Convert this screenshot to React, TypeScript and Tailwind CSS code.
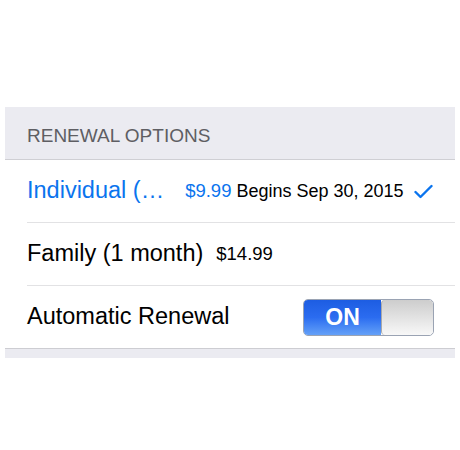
import { useState } from "react";

function Check() {
  return (
    <svg width="19" height="15" viewBox="0 0 19 15" className="ml-auto shrink-0">
      <path
        d="M1.5 8 L6.5 13 L17.5 2"
        fill="none"
        stroke="#0a74ee"
        strokeWidth="2.4"
        strokeLinecap="round"
        strokeLinejoin="round"
      />
    </svg>
  );
}

function Toggle({ on, onChange }: { on: boolean; onChange: () => void }) {
  return (
    <button
      type="button"
      onClick={onChange}
      className="ml-auto flex h-[37px] w-[131px] overflow-hidden rounded-[5px] border border-[#9aa3b3]"
    >
      <span className="flex h-full w-[77px] items-center justify-center bg-gradient-to-b from-[#1d5de2] via-[#2b6cf0] to-[#64a0f7] text-[23px] font-bold text-white">
        {on ? "ON" : "OFF"}
      </span>
      <span className="h-full flex-1 rounded-[4px] border-l border-[#a9a9a9] bg-gradient-to-b from-[#cdcdcd] to-[#f8f8f8]" />
    </button>
  );
}

export default function App() {
  const [selected, setSelected] = useState<"individual" | "family">("individual");
  const [auto, setAuto] = useState(true);

  return (
    <div
      className="min-h-[450px] w-[460px] bg-white px-[5px] pt-[107px]"
      style={{ fontFamily: '"Liberation Sans", Arial, sans-serif' }}
    >
      <div className="bg-[#ebebf1] pb-[9px]">
        <div className="flex h-[53px] items-center border-b border-[#cfcfd4] pl-[22px] pt-[7px] text-[19px] text-[#5e5e63]">
          RENEWAL OPTIONS
        </div>

        <div className="border-b border-[#cdcdd2] bg-white">
          <div
            onClick={() => setSelected("individual")}
            className="ml-[22px] flex h-[63px] items-center border-b border-[#e2e2e4] pr-[22px]"
          >
            <span className={`text-[23.5px] ${selected === "individual" ? "text-[#0a74ee]" : "text-black"}`}>
              Individual (…
            </span>
            <span className="ml-[21px] text-[18.5px] text-[#0a74ee]">$9.99</span>
            <span className="ml-[5px] text-[18px] text-black">Begins Sep 30, 2015</span>
            {selected === "individual" && <Check />}
          </div>

          <div
            onClick={() => setSelected("family")}
            className="ml-[22px] flex h-[63px] items-center border-b border-[#e2e2e4] pr-[22px]"
          >
            <span className={`text-[23.5px] ${selected === "family" ? "text-[#0a74ee]" : "text-black"}`}>
              Family (1 month)
            </span>
            <span className="ml-[13px] text-[18.5px] text-black">$14.99</span>
            {selected === "family" && <Check />}
          </div>

          <div className="ml-[22px] flex h-[62px] items-center pr-[21px]">
            <span className="text-[23.5px] text-black">Automatic Renewal</span>
            <Toggle on={auto} onChange={() => setAuto((v) => !v)} />
          </div>
        </div>
      </div>
    </div>
  );
}
